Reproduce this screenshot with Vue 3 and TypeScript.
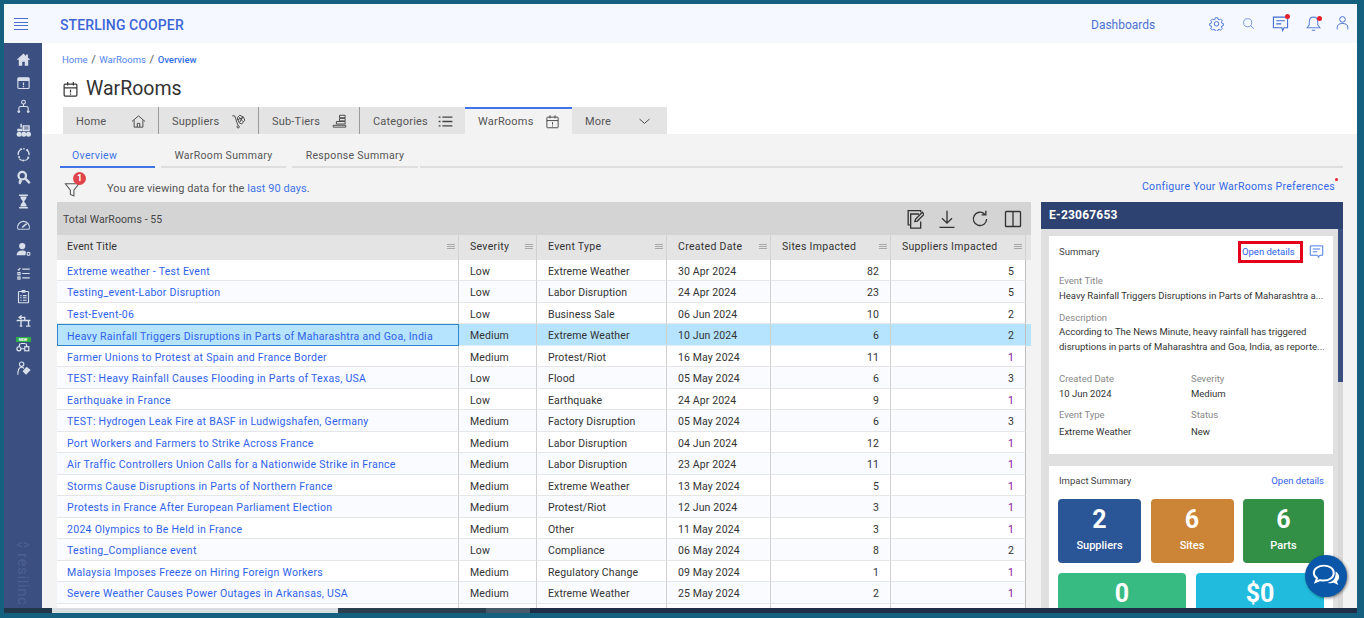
<script setup lang="ts">
interface Row { title: string; sev: string; type: string; date: string; sites: number; sup: number; sel?: boolean }
const rows: Row[] = [
  { title: 'Extreme weather - Test Event', sev: 'Low', type: 'Extreme Weather', date: '30 Apr 2024', sites: 82, sup: 5 },
  { title: 'Testing_event-Labor Disruption', sev: 'Low', type: 'Labor Disruption', date: '24 Apr 2024', sites: 23, sup: 5 },
  { title: 'Test-Event-06', sev: 'Low', type: 'Business Sale', date: '06 Jun 2024', sites: 10, sup: 2 },
  { title: 'Heavy Rainfall Triggers Disruptions in Parts of Maharashtra and Goa, India', sev: 'Medium', type: 'Extreme Weather', date: '10 Jun 2024', sites: 6, sup: 2, sel: true },
  { title: 'Farmer Unions to Protest at Spain and France Border', sev: 'Medium', type: 'Protest/Riot', date: '16 May 2024', sites: 11, sup: 1 },
  { title: 'TEST: Heavy Rainfall Causes Flooding in Parts of Texas, USA', sev: 'Low', type: 'Flood', date: '05 May 2024', sites: 6, sup: 3 },
  { title: 'Earthquake in France', sev: 'Low', type: 'Earthquake', date: '24 Apr 2024', sites: 9, sup: 1 },
  { title: 'TEST: Hydrogen Leak Fire at BASF in Ludwigshafen, Germany', sev: 'Medium', type: 'Factory Disruption', date: '05 May 2024', sites: 6, sup: 3 },
  { title: 'Port Workers and Farmers to Strike Across France', sev: 'Medium', type: 'Labor Disruption', date: '04 Jun 2024', sites: 12, sup: 1 },
  { title: 'Air Traffic Controllers Union Calls for a Nationwide Strike in France', sev: 'Medium', type: 'Labor Disruption', date: '23 Apr 2024', sites: 11, sup: 1 },
  { title: 'Storms Cause Disruptions in Parts of Northern France', sev: 'Medium', type: 'Extreme Weather', date: '13 May 2024', sites: 5, sup: 1 },
  { title: 'Protests in France After European Parliament Election', sev: 'Medium', type: 'Protest/Riot', date: '12 Jun 2024', sites: 3, sup: 1 },
  { title: '2024 Olympics to Be Held in France', sev: 'Medium', type: 'Other', date: '11 May 2024', sites: 3, sup: 1 },
  { title: 'Testing_Compliance event', sev: 'Low', type: 'Compliance', date: '06 May 2024', sites: 8, sup: 2 },
  { title: 'Malaysia Imposes Freeze on Hiring Foreign Workers', sev: 'Medium', type: 'Regulatory Change', date: '09 May 2024', sites: 1, sup: 1 },
  { title: 'Severe Weather Causes Power Outages in Arkansas, USA', sev: 'Medium', type: 'Extreme Weather', date: '25 May 2024', sites: 2, sup: 1 },
]
const headers = ['Event Title', 'Severity', 'Event Type', 'Created Date', 'Sites Impacted', 'Suppliers Impacted']
</script>

<template>
  <div class="frame">
    <header class="topbar">
      <div class="burger"><span></span><span></span><span></span><span></span></div>
      <div class="brand">STERLING COOPER</div>
      <div class="dash">Dashboards</div>
      <div class="top-icons">
        <svg class="ti gear" viewBox="0 0 24 24"><path d="M10 2.500h4l.6 2.800 1.900.8 2.400-1.500 2.800 2.800-1.500 2.400.8 1.900 2.500.6v3.400l-2.500.6-.8 1.900 1.500 2.400-2.800 2.800-2.400-1.500-1.900.8-.6 2.500h-4l-.6-2.500-1.900-.8-2.400 1.500-2.800-2.800 1.500-2.400-.8-1.900-2.500-.6v-3.400l2.500-.6.8-1.900-1.500-2.400 2.800-2.800 2.400 1.500 1.900-.8z" transform="translate(.6 .4) scale(.95)"/><circle cx="12" cy="12.500" r="3.600"/></svg>
        <svg class="ti lighter search" viewBox="0 0 24 24"><circle cx="10.500" cy="10.500" r="7.500"/><path d="M16 16l6 6"/></svg>
        <div class="dotwrap w-msg"><svg class="ti" viewBox="0 0 24 24"><path d="M2 3h20v15h-5l-2 4-1-4H2z"/><path d="M6 8h12M6 12.500h7"/></svg><i class="dot d1"></i></div>
        <div class="dotwrap w-bell"><svg class="ti lighter" viewBox="0 0 24 24"><path d="M12 3c-4 0-6 3-6 7v4l-3 4h18l-3-4v-4c0-4-2-7-6-7z"/><path d="M9.500 21.500h5"/></svg><i class="dot d2"></i></div>
        <svg class="ti user" viewBox="0 0 24 24"><circle cx="12" cy="7" r="4.500"/><path d="M3.500 23v-3c0-4 3-6.500 8.500-6.500s8.500 2.500 8.500 6.500v3"/></svg>
      </div>
    </header>

    <div class="shell">
      <aside class="side">
        <svg class="si" viewBox="0 0 24 24"><path class="f" d="M12 2.500L1 12.500h3.500V22h5.500v-6.500h4V22h5.500v-9.500H23l-4-3.600V4h-3v2.200z"/></svg>
        <svg class="si" viewBox="0 0 24 24"><rect x="3" y="4.500" width="18" height="17" rx="1.500"/><path class="f" d="M3 4.500h18v5H3zM11 12h2v4.500h-2zM11 17.500h2v2h-2z"/></svg>
        <svg class="si" viewBox="0 0 24 24"><circle cx="12" cy="5" r="3"/><path d="M12 8v4M4.500 18v-3c0-2 1-3 3-3h9c2 0 3 1 3 3v3"/><circle class="f" cx="4.500" cy="20" r="2.200"/><circle class="f" cx="19.500" cy="20" r="2.200"/></svg>
        <svg class="si" viewBox="0 0 24 24"><path class="f" d="M7 1h2.500v6H7zM10.500 3.500H22V13H10.500zM2 9h8v4H2z"/><circle class="f" cx="5" cy="18" r="4"/><circle class="f" cx="12.500" cy="18" r="4"/><circle class="f" cx="20" cy="18" r="4"/><path class="hole" d="M13 6.500h7M13 9.500h7" /></svg>
        <svg class="si" viewBox="0 0 24 24"><path d="M7 4.500A9 9 0 0 0 3.500 13M5 18.500a9 9 0 0 0 6 3M14 21.500a9 9 0 0 0 6-4M21 13a9 9 0 0 0-4-8.500M14 3a9 9 0 0 0-3 0"/><circle class="f" cx="5" cy="16" r="1.700"/><circle class="f" cx="12" cy="21.500" r="1.700"/><circle class="f" cx="19.500" cy="17" r="1.700"/><circle class="f" cx="18" cy="5" r="1.700"/><circle class="f" cx="8" cy="3.500" r="1.700"/></svg>
        <svg class="si" viewBox="0 0 24 24"><circle cx="10" cy="9" r="6" stroke-width="3.600"/><path d="M14.500 13.500L22 21" stroke-width="3.800"/><path class="f" d="M5 15l5 2-3 6-3-2z"/></svg>
        <svg class="si" viewBox="0 0 24 24"><path d="M5 2h14M5 22h14" stroke-width="2.400"/><path class="f" d="M7 4h10c0 4-3 6-4 8 1 2 4 4 4 8H7c0-4 3-6 4-8-1-2-4-4-4-8z"/></svg>
        <svg class="si" viewBox="0 0 24 24"><path d="M3 18a9.500 9.500 0 1 1 18 0"/><path d="M3 18h18" stroke-width="1.400"/><path d="M10 15l7-6" stroke-width="2.400"/></svg>
        <svg class="si" viewBox="0 0 24 24"><circle class="f" cx="10" cy="6.500" r="5"/><path class="f" d="M1 21c0-5 3-7.500 9-7.500 4 0 5.500 1 6 2.500l-1 5z"/><circle cx="20" cy="19" r="2.400"/></svg>
        <svg class="si" viewBox="0 0 24 24"><path d="M10 5h12M10 12h12M10 19h12M3 5l1.500 1.500L7 3"/><rect x="3" y="10.500" width="3.500" height="3.500"/><rect x="3" y="17.500" width="3.500" height="3.500"/></svg>
        <svg class="si" viewBox="0 0 24 24"><rect x="4" y="4" width="16" height="18" rx="1"/><path class="f" d="M9 1.500h6v4.500H9z"/><path d="M11 10.500h6M11 14h6M11 18h6M7 10.500h2M7 14h2M7 18h2"/></svg>
        <svg class="si" viewBox="0 0 24 24"><path d="M1 12h22" stroke-width="2.400"/><path d="M9 4L5 7l4 3M4 7h10v5M8 12v9M20 12v9M6 21h4M16 21h7" stroke-width="2.200"/></svg>
        <div class="si-new"><b>NEW</b><svg viewBox="0 0 24 16"><circle cx="5" cy="11" r="3.500"/><rect x="15" y="7.500" width="7" height="7"/><path d="M8 2h8M7 2l-2 6M17 2l2 6M9 11h5"/></svg></div>
        <svg class="si" viewBox="0 0 24 24"><circle cx="9" cy="5" r="3.500"/><path d="M3 22c0-7 1-12 6-12 2 0 3 1 4 2"/><path class="f" d="M17 9l6.500 5.500-7.500 7.500-5.500-5.500z"/></svg>
        <div class="logo"><span class="logo-mark">&lt;&gt;</span><span class="logo-text">resilinc</span></div>
      </aside>

      <main class="main">
        <div class="head">
          <nav class="crumb"><a>Home</a><i>/</i><a>WarRooms</a><i>/</i><a class="cur">Overview</a></nav>
          <h1 class="title">
            <svg viewBox="0 0 24 24"><rect x="3" y="5" width="18" height="17" rx="1.500"/><path d="M3 10.500h18M8 2v5M16 2v5M12 13v4M12 18.500v1.500"/></svg>
            WarRooms
          </h1>
          <div class="tabs">
            <div class="tab w1">Home
              <svg viewBox="0 0 24 24"><path d="M1.500 12L12 3l10.500 9M5 10v11h14V10M10 21v-6h4v6"/></svg></div>
            <div class="tab w2">Suppliers
              <svg viewBox="0 0 24 24"><path d="M2 3h4l5 15"/><circle cx="11.500" cy="20.500" r="1.800"/><path d="M10 6l4-4 6 3 2 5-5 6-4-2zM13 5l6 7M19 4l-5 9M10 9l9-3"/></svg></div>
            <div class="tab w3">Sub-Tiers
              <svg viewBox="0 0 24 24"><path d="M12 2h9v4h-9zM12 7h9v4h-9zM7 12h14v4H7zM2 18h20v3H2z"/></svg></div>
            <div class="tab w4">Categories
              <svg class="thick" viewBox="0 0 24 24"><path d="M7 5h16M7 12h16M7 19h16M1 5h3M1 12h3M1 19h3"/></svg></div>
            <div class="tab w5 active">WarRooms
              <svg viewBox="0 0 24 24"><rect x="3" y="5" width="18" height="17" rx="1"/><path d="M3 10.500h18M8 2v5M16 2v5M12 13v4M12 18.500v1.500"/></svg></div>
            <div class="tab w6">More
              <svg viewBox="0 0 24 24"><path d="M4 8l8 7 8-7"/></svg></div>
          </div>
        </div>

        <div class="content">
          <div class="subtabs">
            <div class="st on" style="width:95px">Overview</div>
            <div class="st" style="width:125px">WarRoom Summary</div>
            <div class="st" style="width:126px">Response Summary</div>
            <div class="st rest"></div>
          </div>
          <div class="info">
            <div class="filter">
              <svg viewBox="0 0 24 24"><path d="M2 4h19l-7 9v8l-5-2v-6z"/></svg>
              <span class="badge">1</span>
            </div>
            <p>You are viewing data for the <a>last 90 days</a>.</p>
            <a class="cfg">Configure Your WarRooms Preferences<i></i></a>
          </div>

          <div class="split">
            <section class="grid">
              <div class="gbar">
                <span>Total WarRooms - 55</span>
                <div class="gicons">
                  <svg viewBox="0 0 24 24"><path d="M20 4V2H5v17h2" /><path d="M18 6H8v17h12v-8"/><path d="M13 15l1-3 8-8 2 2.500-8 8z"/></svg>
                  <svg viewBox="0 0 24 24"><path d="M12 2v15M6 11l6 6 6-6M3 22h18"/></svg>
                  <svg viewBox="0 0 24 24"><path d="M20 12a8 8 0 1 1-2.500-6M19 2v5h-5"/></svg>
                  <svg viewBox="0 0 24 24"><rect x="3" y="3" width="18" height="18" rx="1"/><path d="M12 3v18"/></svg>
                </div>
              </div>
              <div class="ghead">
                <div v-for="h in headers" :key="h" class="hc">{{ h }}<em><b></b><b></b><b></b></em></div>
              </div>
              <div v-for="r in rows" :key="r.title" class="row" :class="{ sel: r.sel }">
                <div class="c t1"><a>{{ r.title }}</a></div>
                <div class="c">{{ r.sev }}</div>
                <div class="c">{{ r.type }}</div>
                <div class="c">{{ r.date }}</div>
                <div class="c num">{{ r.sites }}</div>
                <div class="c num" :class="{ one: r.sup === 1 }">{{ r.sup }}</div>
              </div>
              <div class="row stub"><div class="c"></div><div class="c"></div><div class="c"></div><div class="c"></div><div class="c"></div><div class="c"></div></div>
            </section>

            <aside class="panel">
              <div class="pt">E-23067653</div>
              <div class="pb-wrap">
                <div class="pb">
                  <div class="card c1">
                    <div class="ch">
                      <span>Summary</span>
                      <a class="hl">Open details</a>
                      <svg viewBox="0 0 24 24"><path d="M2 3h20v15h-5l-2 4-1-4H2z"/><path d="M6 8h12M6 12.500h7"/></svg>
                    </div>
                    <div class="lb first">Event Title</div>
                    <div class="vl">Heavy Rainfall Triggers Disruptions in Parts of Maharashtra a...</div>
                    <div class="lb l2">Description</div>
                    <div class="vl desc">According to The News Minute, heavy rainfall has triggered<br>disruptions in parts of Maharashtra and Goa, India, as reporte...</div>
                    <div class="two">
                      <div><div class="lb">Created Date</div><div class="vl">10 Jun 2024</div></div>
                      <div><div class="lb">Severity</div><div class="vl">Medium</div></div>
                      <div class="low"><div class="lb">Event Type</div><div class="vl">Extreme Weather</div></div>
                      <div class="low"><div class="lb">Status</div><div class="vl">New</div></div>
                    </div>
                  </div>
                  <div class="card c2">
                    <div class="ch2"><span>Impact Summary</span><a>Open details</a></div>
                    <div class="tiles t3">
                      <div class="tile blue"><b>2</b><span>Suppliers</span></div>
                      <div class="tile orange"><b>6</b><span>Sites</span></div>
                      <div class="tile green"><b>6</b><span>Parts</span></div>
                    </div>
                    <div class="tiles t2">
                      <div class="tile teal"><b>0</b></div>
                      <div class="tile cyan"><b>$0</b></div>
                    </div>
                  </div>
                </div>
                <div class="vscroll"><i></i></div>
              </div>
            </aside>
          </div>
        </div>
      </main>
    </div>
    <div class="hscroll"><i class="a"></i><i class="b"></i><i class="c2b"></i><i class="d"></i><i class="e"></i></div>

    <div class="chat">
      <svg viewBox="0 0 32 32"><path d="M13 4c-6 0-11 3.500-11 8 0 2.500 1.500 4.500 3.500 6L4 22l5-2c1.300.4 2.600.5 4 .5 6 0 11-3.500 11-8.500S19 4 13 4z"/><path d="M26 10.500c2.500 1.500 4 3.500 4 6 0 2-1 3.500-2.500 5l1.500 4-5-2.500c-2 .6-5 .6-7-.2 4 0 10-3 9-12.300z" class="solid"/></svg>
    </div>
  </div>
</template>

<style>
html, body { margin: 0; padding: 0; overflow: hidden; background: #15607f; }
</style>

<style scoped>
* { box-sizing: border-box; }
.frame {
  width: 1364px; height: 618px; background: #15607f;
  padding: 4px 7px 5px 4px; display: flex; flex-direction: column;
  font-family: Roboto, "Liberation Sans", sans-serif; color: #444; overflow: hidden; position: relative;
}
a { color: #2f62ea; text-decoration: none; }
.topbar { height: 39px; flex: none; background: #f5f8ff; display: flex; align-items: center; padding-top: 2px; }
.burger { width: 38px; display: flex; flex-direction: column; gap: 2.300px; padding: 0 0 1px 9.500px; }
.burger span { display: block; width: 14px; height: 1.300px; background: #4a6fd0; }
.brand { margin-left: 18px; font-size: 14px; font-weight: 500; color: #3c66d6; letter-spacing: .1px; flex: none; width: 1031px; }
.dash { font-size: 12px; color: #4c72cf; width: 118px; }
.top-icons { display: flex; align-items: center; margin-top: -3px; }
.ti { width: 17px; height: 17px; fill: none; stroke: #3f6bd0; stroke-width: 1.500; display: block; }
.ti.lighter { stroke: #5f85d8; }
.gear { width: 15px; height: 15px; margin-right: 18px; }
.search { width: 13px; height: 13px; margin-right: 17px; margin-top: 1px; }
.user { width: 15px; height: 15px; margin-left: 13px; margin-top: -2px; }
.dotwrap { position: relative; }
.w-msg { margin-right: 16px; }
.dot { position: absolute; width: 5px; height: 5px; border-radius: 50%; background: #e8202c; }
.d1 { right: -1px; top: -1px; }
.d2 { right: 0; top: 1px; }

.shell { flex: 1; display: flex; min-height: 0; }
.side { width: 38px; flex: none; background: #3b5080; display: flex; flex-direction: column; align-items: center; padding-top: 8.500px; gap: 8.800px; position: relative; }
.si { width: 15px; height: 15px; fill: none; stroke: #d8deea; stroke-width: 1.800; flex: none; display: block; }
.si .f { fill: #d8deea; stroke: none; }
.si .hole { stroke: #3b5080; stroke-width: 1.500; }
.si-new { width: 15px; height: 15px; flex: none; display: flex; flex-direction: column; align-items: center; }
.si-new b { display: block; background: #2fae4a; color: #fff; font-size: 4px; line-height: 5px; height: 5px; width: 15px; text-align: center; font-weight: 700; }
.si-new svg { width: 14px; height: 10px; fill: none; stroke: #e4e8f0; stroke-width: 2; }
.logo { position: absolute; left: 0; right: 0; top: 495px; display: flex; flex-direction: column; align-items: center; color: #4d6190; }
.logo-mark { font-size: 13px; line-height: 14px; }
.logo-text { writing-mode: vertical-rl; font-size: 15px; line-height: 16px; letter-spacing: .6px; margin-top: 1px; }

.main { flex: 1; min-width: 0; display: flex; flex-direction: column; background: #fff; }
.head { height: 91px; flex: none; padding: 11px 0 0 21px; display: flex; flex-direction: column; }
.crumb { font-size: 9.500px; line-height: 12px; display: flex; align-items: center; gap: 3.600px; height: 12px; margin-left: -1px; }
.crumb a { color: #5083f2; }
.crumb i { font-style: normal; color: #555; font-size: 11px; }
.crumb .cur { color: #2f6fe8; font-weight: 500; }
.title { margin: 11px 0 0; font-size: 19.500px; font-weight: 400; line-height: 24px; color: #333; display: flex; align-items: center; gap: 7px; height: 24px; }
.title svg { width: 17px; height: 18px; fill: none; stroke: #333; stroke-width: 1.700; margin-left: -1px; }
.tabs { display: flex; margin-top: 6px; height: 27px; }
.tab { height: 27px; background: #e4e4e4; border-right: 1px solid #9a9a9a; font-size: 11px; color: #555; display: flex; align-items: center; justify-content: space-between; padding: 2px 12px 0 13px; flex: none; letter-spacing: .2px; }
.tab svg { width: 15px; height: 15px; fill: none; stroke: #444; stroke-width: 1.500; flex: none; margin-top: -1px; }
.tab svg.thick { stroke-width: 2.200; }
.w1 { width: 96px; } .w2 { width: 100px; } .w3 { width: 101px; } .w4 { width: 105px; border-right: 0; }
.w5 { width: 107px; } .w6 { width: 95px; border-right: 0; padding-right: 15px; }
.active { background: #f3f3f3; border-top: 2px solid #3f74e6; border-right: 0; padding-top: 0; }

.content { flex: 1; min-height: 0; background: #f3f3f3; display: flex; flex-direction: column; }
.subtabs { display: flex; height: 34px; flex: none; padding-left: 18px; gap: 6px; margin-right: 14px; }
.st { height: 34px; padding-top: 15px; font-size: 10.500px; line-height: 14px; color: #555; text-align: center; border-bottom: 2px solid #dedede; flex: none; letter-spacing: .32px; }
.st.on { color: #3f74e6; border-bottom-color: #3f74e6; text-align: left; padding-left: 12px; }
.st.rest { flex: 1; margin-left: -4px; }
.info { height: 34px; flex: none; display: flex; padding: 0 22px; }
.filter { position: relative; width: 18px; height: 18px; margin-right: 25px; margin-top: 10px; flex: none; }
.filter svg { width: 17px; height: 19px; fill: none; stroke: #555; stroke-width: 1.500; display: block; margin-top: 2px; }
.badge { position: absolute; left: 9px; top: -6px; width: 13px; height: 13px; border-radius: 50%; background: #e0454b; color: #fff; font-size: 9px; font-weight: 700; line-height: 13px; text-align: center; }
.info p { margin: 14px 0 0; font-size: 11px; line-height: 14px; color: #555; letter-spacing: .06px; flex: 1; }
.info p a { color: #3f74e6; }
.cfg { font-size: 10.500px; line-height: 14px; margin-top: 12px; height: 14px; color: #3467e6; letter-spacing: .31px; position: relative; display: block; }
.cfg i { position: absolute; right: -3px; top: -2px; width: 3px; height: 3px; border-radius: 50%; background: #e8202c; }

.split { flex: 1; min-height: 0; display: flex; padding-left: 15px; }
.grid { width: 974px; flex: none; overflow: hidden; }
.gbar { height: 33px; background: #d4d4d4; display: flex; align-items: center; justify-content: space-between; padding: 2px 8px 0 6px; font-size: 10.500px; color: #444; letter-spacing: .1px; }
.gicons { display: flex; gap: 13px; align-items: center; margin-top: -2px; }
.gicons svg { width: 20px; height: 20px; fill: none; stroke: #333; stroke-width: 1.600; display: block; }
.ghead, .row { display: grid; grid-template-columns: 402px 78px 130px 104px 120px 135px; }
.ghead { height: 25px; background: #e4e4e4; }
.hc { font-size: 10.500px; color: #333; display: flex; align-items: center; justify-content: space-between; padding: 0 3px 2px 11px; border-right: 1px solid #cfd3d6; letter-spacing: .3px; }
.hc:first-child { padding-left: 10px; letter-spacing: .15px; }
.hc em { display: flex; flex-direction: column; gap: 1.200px; width: 8px; }
.hc em b { display: block; height: 1px; background: #a8a8a8; }
.row { height: 21.470px; background: #fff; width: 969px; }
.row:nth-child(even) { background: #fafbff; }
.row .c { font-size: 10.500px; line-height: 24px; height: 21.470px; color: #333; padding: 0 10px 0 11px; border-right: 1px solid #d0d0d0; border-bottom: 1.500px solid #e4e6e8; white-space: nowrap; overflow: hidden; letter-spacing: .12px; }
.row .c:last-child { border-right-color: #bdbdbd; }
.row .c.t1 { padding-left: 10px; letter-spacing: .29px; }
.row .num { text-align: right; padding-right: 11px; }
.row .c a { color: #2f62ea; }
.row .one { color: #8a0f9a; }
.row.sel { background: #b6e3fd; width: 974px; }
.row.sel .c { border-bottom-color: #e0eef6; }
.row.sel .t1 { border: 1px solid #2f86cf; line-height: 23px; padding-left: 9px; }
.row.stub { height: 5px; background: #fff; }
.row.stub .c { height: 5px; border-bottom: 0; }

.panel { width: 302px; flex: none; margin-left: 10px; display: flex; flex-direction: column; overflow: hidden; }
.pt { height: 27px; background: #2e4272; color: #fff; font-size: 12px; font-weight: 700; line-height: 27px; padding-left: 8px; flex: none; letter-spacing: .2px; }
.pb-wrap { flex: 1; min-height: 0; display: flex; background: #e0e0e0; overflow: hidden; }
.pb { flex: 1; padding: 7px 5px 0 8px; overflow: hidden; }
.vscroll { width: 5px; flex: none; background: #d9d9d9; }
.vscroll i { display: block; height: 153px; background: #3b5080; }
.card { background: #fff; width: 284px; padding: 0 10px; }
.c1 { height: 218px; padding-top: 8px; }
.c2 { height: 200px; margin-top: 12px; padding: 8px 9px 0 9px; }
.ch { display: flex; align-items: center; height: 15px; font-size: 9.500px; color: #444; }
.ch span { flex: 1; }
.ch a { font-size: 9.500px; }
.hl { border: 3px solid #e4001b; height: 22px; width: 65px; display: flex; align-items: center; padding-left: 1px; margin-right: 6px; white-space: nowrap; flex: none; }
.ch svg { width: 15px; height: 15px; fill: none; stroke: #3f74e6; stroke-width: 1.500; margin-right: -1px; flex: none; }
.lb { font-size: 9.500px; line-height: 13px; color: #888; }
.vl { font-size: 9.500px; line-height: 15px; margin-top: 1px; color: #333; white-space: nowrap; }
.lb.first { margin-top: 15px; }
.lb.l2 { margin-top: 8px; }
.vl.desc { margin-top: 0; }
.two { display: grid; grid-template-columns: 132px 1fr; row-gap: 7px; margin-top: 18px; }
.low .vl { margin-top: 3px; }
.ch2 { display: flex; justify-content: space-between; font-size: 9.500px; line-height: 14px; color: #444; padding: 0 0 0 1px; }
.ch2 a { font-size: 9.500px; }
.tiles { display: grid; }
.t3 { grid-template-columns: 83px 83px 81px; margin-top: 11px; gap: 9.500px; }
.t2 { grid-template-columns: 128px 128px; margin-top: 10px; gap: 10px; }
.tile { height: 64px; border-radius: 4px; color: #fff; display: flex; flex-direction: column; align-items: center; }
.tile b { font-size: 25px; line-height: 28px; font-weight: 700; margin-top: 7px; }
.tile span { font-size: 11px; font-weight: 500; line-height: 13px; margin-top: 5px; }
.blue { background: #2a5596; } .orange { background: #cc8536; } .green { background: #329046; }
.teal { background: #38bb83; } .cyan { background: #21bcdd; }
.hscroll { height: 5px; flex: none; display: flex; }
.hscroll i { display: block; height: 5px; }
.hscroll .a { width: 48px; background: #22384a; }
.hscroll .b { width: 286px; background: #d8dde0; }
.hscroll .c2b { width: 148px; background: #2a3f50; }
.hscroll .d { width: 44px; background: #45596a; }
.hscroll .e { flex: 1; background: #1f2f48; }
.chat { position: absolute; left: 1305px; top: 555px; width: 42px; height: 42px; border-radius: 50%; background: #0a56a8; box-shadow: 1px 1px 3px rgba(0,0,0,.5); display: flex; align-items: center; justify-content: center; }
.chat svg { width: 29px; height: 29px; fill: none; stroke: #fff; stroke-width: 2.200; }
.chat svg .solid { fill: #fff; stroke: none; }
</style>
